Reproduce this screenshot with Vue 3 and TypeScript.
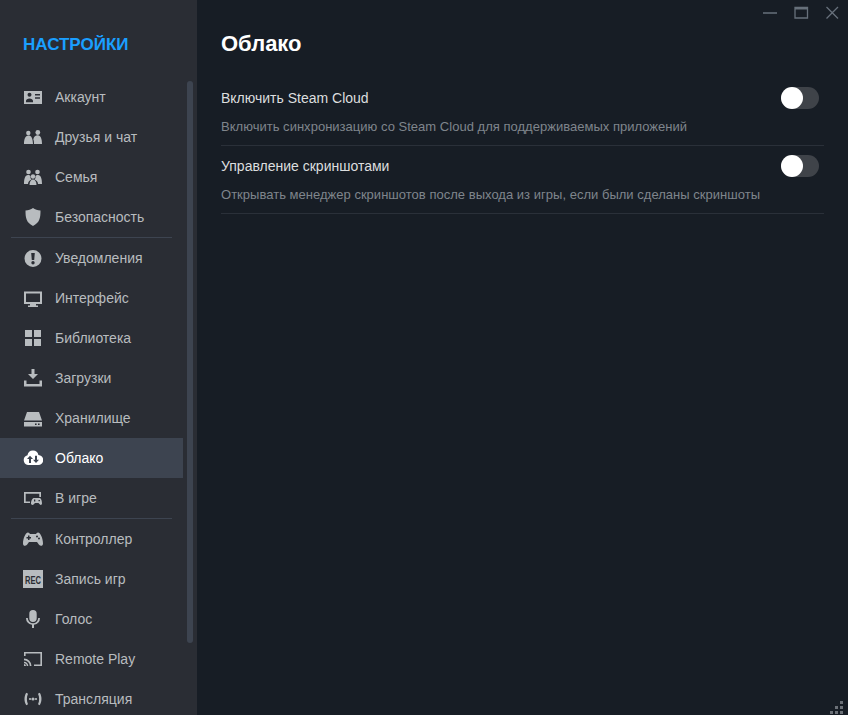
<script setup lang="ts">
interface NavItem { label: string; icon: string; active?: boolean; sep?: boolean }
const items: NavItem[] = [
  { label: 'Аккаунт', icon: 'account' },
  { label: 'Друзья и чат', icon: 'friends' },
  { label: 'Семья', icon: 'family' },
  { label: 'Безопасность', icon: 'shield', sep: true },
  { label: 'Уведомления', icon: 'alert' },
  { label: 'Интерфейс', icon: 'monitor' },
  { label: 'Библиотека', icon: 'grid' },
  { label: 'Загрузки', icon: 'download' },
  { label: 'Хранилище', icon: 'drive' },
  { label: 'Облако', icon: 'cloud', active: true },
  { label: 'В игре', icon: 'ingame', sep: true },
  { label: 'Контроллер', icon: 'pad' },
  { label: 'Запись игр', icon: 'rec' },
  { label: 'Голос', icon: 'mic' },
  { label: 'Remote Play', icon: 'cast' },
  { label: 'Трансляция', icon: 'broadcast' },
]
const settings = [
  { title: 'Включить Steam Cloud', desc: 'Включить синхронизацию со Steam Cloud для поддерживаемых приложений' },
  { title: 'Управление скриншотами', desc: 'Открывать менеджер скриншотов после выхода из игры, если были сделаны скриншоты' },
]
</script>

<template>
  <div class="app">
    <aside class="side">
      <div class="brand">НАСТРОЙКИ</div>
      <div class="scrollwrap">
        <nav class="nav">
          <template v-for="item in items" :key="item.label">
            <div class="row" :class="{ active: item.active }">
              <svg class="ico" viewBox="0 0 20 20" width="20" height="20" fill="currentColor">
                <template v-if="item.icon === 'account'">
                  <path fill-rule="evenodd" d="M1 4h18v13H1zM6.500 5.800a2 2 0 1 0 0 4 2 2 0 0 0 0-4zM3 15.200h7v-1.300c0-1.500-1.600-2.500-3.500-2.500S3 12.400 3 13.900zM12 7v1.500h5V7zM12 10.200v1.500h5v-1.500z" />
                </template>
                <template v-else-if="item.icon === 'friends'">
                  <circle cx="5.300" cy="6" r="2.200" /><circle cx="14.800" cy="5.500" r="2.400" />
                  <path d="M1 17c0-4.500 1.300-8.500 4.300-8.500S9.800 11 10 17zM11 17c0-1.500 0-3-.7-4.800.6-2.400 2.100-3.900 4.500-3.900 3 0 4.200 4 4.200 8.700z" />
                </template>
                <template v-else-if="item.icon === 'family'">
                  <circle cx="5.500" cy="5" r="2.300" /><circle cx="14.500" cy="5" r="2.300" /><circle cx="10" cy="9.500" r="2.200" />
                  <path d="M6.500 18c0-3.500 1.500-5.500 3.500-5.500s3.500 2 3.500 5.500z" />
                  <path d="M1 17c0-5 1-9 4-9 1 0 2 .3 2.500 1-.3 1.500.3 3 1 3.600-2 1-3.500 2.500-3.500 4.400zM19 17c0-5-1-9-4-9-1 0-2 .3-2.500 1 .3 1.500-.3 3-1 3.600 2 1 3.500 2.500 3.500 4.400z" />
                </template>
                <template v-else-if="item.icon === 'shield'">
                  <path d="M10 1c2 1.500 4.700 2.300 7.500 2.500 0 7-.6 12-7.500 15.500C3.100 15.500 2.500 10.500 2.500 3.500 5.300 3.300 8 2.500 10 1z" />
                </template>
                <template v-else-if="item.icon === 'alert'">
                  <path fill-rule="evenodd" d="M10 2a8.500 8.500 0 1 0 0 17 8.500 8.500 0 0 0 0-17zM8.200 5h3.600l-.6 7H8.800zM10 13a1.700 1.700 0 1 1 0 3.400A1.700 1.700 0 0 1 10 13z" />
                </template>
                <template v-else-if="item.icon === 'monitor'">
                  <path fill-rule="evenodd" d="M1 3.500h18V16h-6v1.500h2V19H5v-1.500h2V16H1zM3 5.500V14h14V5.500z" />
                </template>
                <template v-else-if="item.icon === 'grid'">
                  <path d="M2 2h7v7H2zM11 2h7v7h-7zM2 11h7v7H2zM11 11h7v7h-7z" />
                </template>
                <template v-else-if="item.icon === 'download'">
                  <path d="M8.500 1h3v5h3.500L10 11 5 6h3.500z" />
                  <path d="M1 12.500h2.500V16h13v-3.500H19v6H1z" />
                </template>
                <template v-else-if="item.icon === 'drive'">
                  <path fill-rule="evenodd" d="M4 4h12l3 8.500H1zM1 14h18v4.500H1zM12 15.500v1.600h1.600v-1.600zM15 15.500v1.600h1.600v-1.600z" />
                </template>
                <template v-else-if="item.icon === 'cloud'">
                  <path fill-rule="evenodd" d="M10 2.500a5.500 5.500 0 0 1 5.400 4.500A4.800 4.800 0 0 1 15 17H5A5 5 0 0 1 4.500 7.200 5.500 5.500 0 0 1 10 2.500zM7 7.800l-3 3.200h2v4h2v-4h2zM13 15l3-3.200h-2v-4h-2v4h-2z" />
                </template>
                <template v-else-if="item.icon === 'ingame'">
                  <path d="M1 4h17v5h-1.700V5.700H2.700v7.800H7V15H1z" />
                  <path fill-rule="evenodd" d="M11 10h5.500c1.500 0 2.500 2.700 2.500 5.500 0 1.500-1.400 2-2.300.8L15.500 15h-3.500L10.800 16.300c-.9 1.200-2.800.7-2.800-.8 0-2.800 1.500-5.500 3-5.500zM11 11.500v2h1.300v-2zM15.500 12v1.300h1.400V12z" />
                </template>
                <template v-else-if="item.icon === 'pad'">
                  <path fill-rule="evenodd" d="M5 3.500c1 0 1.500.8 2 1.500h6c.5-.7 1-1.500 2-1.500 2.500 0 5 6 5 11 0 2.500-2.500 3-4 1.200L14 13H6l-2 2.700C2.500 17.500 0 17 0 14.500c0-5 2.500-11 5-11zM5 6.500v1.500H3.500v1.500H5V11h1.500V9.500H8V8H6.500V6.500zM14 6.500a1 1 0 1 0 0 2 1 1 0 0 0 0-2zM16 8.500a1 1 0 1 0 0 2 1 1 0 0 0 0-2z" />
                </template>
                <template v-else-if="item.icon === 'rec'">
                  <path d="M0 1h20v18H0z" /><text x="10" y="11.200" transform="scale(1 1.300)" text-anchor="middle" textLength="16" lengthAdjust="spacingAndGlyphs" class="rec">REC</text>
                </template>
                <template v-else-if="item.icon === 'mic'">
                  <path d="M10 1a3.700 3.700 0 0 1 3.700 3.700v4.600a3.700 3.700 0 0 1-7.400 0V4.700A3.700 3.700 0 0 1 10 1z" />
                  <path d="M3 9h1.800a5.200 5.200 0 0 0 10.400 0H17a7 7 0 0 1-6 6.700V19H9v-3.300A7 7 0 0 1 3 9z" />
                </template>
                <template v-else-if="item.icon === 'cast'">
                  <path d="M1 3h18v14h-8v-1.600h6.400V4.600H2.600V7H1z" />
                  <path d="M1 9.500a7.500 7.500 0 0 1 7.500 7.500H6.800A5.800 5.800 0 0 0 1 11.200zM1 12.700A4.300 4.300 0 0 1 5.300 17H3.700A2.700 2.700 0 0 0 1 14.300zM1 15a2 2 0 0 1 2 2H1z" />
                </template>
                <template v-else>
                  <circle cx="10" cy="10" r="1.600" /><circle cx="7" cy="10" r="1.100" /><circle cx="13" cy="10" r="1.100" />
                  <path d="M3.300 3.800 5 4.800C3.500 7.800 3.500 12.200 5 15.200L3.300 16.200C.9 12.800.9 7.200 3.300 3.800zM16.700 3.800 15 4.800C16.500 7.800 16.500 12.200 15 15.200L16.700 16.200C19.100 12.800 19.100 7.200 16.700 3.800z" />
                </template>
              </svg>
              <span class="label">{{ item.label }}</span>
            </div>
            <div v-if="item.sep" class="sep"></div>
          </template>
        </nav>
        <div class="track"><div class="thumb"></div></div>
      </div>
    </aside>
    <main class="main">
      <div class="winbar">
        <svg class="win" width="16" height="16" viewBox="0 0 16 16"><path d="M1 8h14" stroke="#67707b" stroke-width="1.500" /></svg>
        <svg class="win" width="16" height="16" viewBox="0 0 16 16" fill="none"><path d="M2 2.500h12.500v10.500H2z" stroke="#67707b" stroke-width="1.300" /><path d="M2 3.500h12.500" stroke="#67707b" stroke-width="2" /></svg>
        <svg class="win" width="16" height="16" viewBox="0 0 16 16"><path d="M2.500 2 14 13.500M14 2 2.500 13.500" stroke="#67707b" stroke-width="1.300" /></svg>
      </div>
      <section class="content">
        <h1 class="title">Облако</h1>
        <div v-for="s in settings" :key="s.title" class="setting">
          <div class="head">
            <span class="stitle">{{ s.title }}</span>
            <span class="toggle"><span class="knob"></span></span>
          </div>
          <div class="desc">{{ s.desc }}</div>
        </div>
      </section>
      <svg class="grip" width="14" height="14" viewBox="0 0 14 14" fill="#6b7077">
        <rect x="10" y="1" width="3" height="3" /><rect x="5" y="6" width="3" height="3" /><rect x="10" y="6" width="3" height="3" /><rect x="0" y="11" width="3" height="3" /><rect x="5" y="11" width="3" height="3" /><rect x="10" y="11" width="3" height="3" />
      </svg>
    </main>
  </div>
</template>

<style>
html, body { margin: 0; background: #171d25; }
</style>

<style scoped>
.app {
  display: flex;
  width: 848px;
  height: 715px;
  overflow: hidden;
  font-family: "Liberation Sans", Arial, sans-serif;
  background: #171d25;
}
.side {
  width: 197px;
  flex: none;
  background: #2a2d34;
  display: flex;
  flex-direction: column;
}
.brand {
  height: 77px;
  box-sizing: border-box;
  padding: 35px 0 0 23px;
  font-size: 17px;
  line-height: 20px;
  font-weight: 700;
  color: #1a9fff;
}
.scrollwrap { display: flex; flex: 1; min-height: 0; }
.nav { width: 183px; flex: none; }
.row {
  height: 40px;
  display: flex;
  align-items: center;
  padding-left: 23px;
  box-sizing: border-box;
  color: #b8bcbf;
  font-size: 14px;
}
.row.active { background: #3d4450; color: #fff; }
.ico { flex: none; width: 20px; height: 20px; margin-right: 12px; }
.rec { font-size: 8.500px; font-weight: 700; fill: #2a2d34; font-family: "Liberation Sans", sans-serif; }
.sep { height: 1px; margin: 0 11px 0 11px; background: #3d4450; }
.track { width: 6px; margin-left: 4px; padding-top: 4px; }
.thumb { height: 562px; width: 6px; border-radius: 3px; background: #3d4450; }
.main { flex: 1; position: relative; min-width: 0; }
.winbar {
  height: 27px;
  display: flex;
  justify-content: flex-end;
  align-items: flex-start;
  gap: 15px;
  padding: 5px 8px 0 0;
  box-sizing: border-box;
}
.win { flex: none; }
.content { padding: 0 24px 0 24px; }
.title {
  margin: 0;
  height: 51px;
  padding-top: 5px;
  box-sizing: border-box;
  font-size: 22px;
  line-height: 24px;
  font-weight: 700;
  color: #fff;
}
.setting {
  height: 68px;
  box-sizing: border-box;
  border-bottom: 1px solid #2a3039;
  padding-top: 8px;
}
.head {
  height: 24px;
  display: flex;
  align-items: center;
  justify-content: space-between;
  padding-right: 5px;
}
.stitle { font-size: 14px; color: #dcdedf; }
.toggle {
  width: 38px;
  height: 22px;
  border-radius: 11px;
  background: #3f4349;
  position: relative;
  display: block;
}
.knob {
  position: absolute;
  left: 0;
  top: 0;
  width: 22px;
  height: 22px;
  border-radius: 50%;
  background: #fff;
}
.desc { margin-top: 9px; font-size: 13px; line-height: 16px; letter-spacing: 0.02px; color: #7f858c; }
.grip { position: absolute; right: 4px; bottom: 1px; }
</style>
